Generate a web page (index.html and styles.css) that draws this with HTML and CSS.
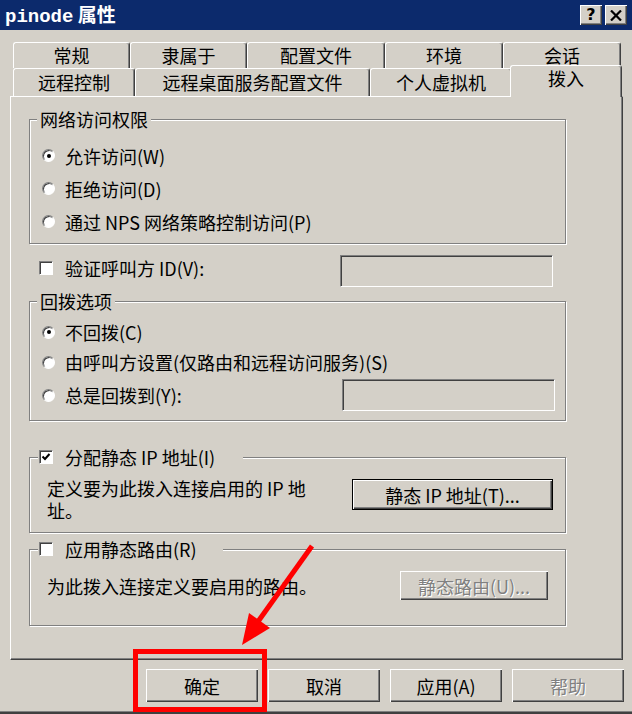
FILE: index.html
```html
<!DOCTYPE html>
<html lang="zh-CN">
<head>
    <meta charset="UTF-8">
    <title>pinode 属性</title>
    <link rel="stylesheet" href="styles.css">
</head>
<body>
    <div class="titlebar">
        <span class="title"><span class="mono">pinode</span> 属性</span>
        <div class="caption-btns">
            <span class="cbtn">?</span>
            <span class="cbtn">
                <svg width="12" height="11" viewBox="0 0 12 11"><path d="M1 0.5 L11 10.5 M11 0.5 L1 10.5" stroke="#000" stroke-width="2.2"/></svg>
            </span>
        </div>
    </div>

    <div class="tabs">
        <div class="tab-row back">
            <div class="tab" style="width:117px">常规</div>
            <div class="tab" style="width:117px">隶属于</div>
            <div class="tab" style="width:138px">配置文件</div>
            <div class="tab" style="width:118px">环境</div>
            <div class="tab" style="width:118px">会话</div>
        </div>
        <div class="tab-row front">
            <div class="tab" style="width:122px">远程控制</div>
            <div class="tab" style="width:235px">远程桌面服务配置文件</div>
            <div class="tab" style="width:142px">个人虚拟机</div>
            <div class="tab active" style="width:112px">拨入</div>
        </div>
    </div>

    <div class="panel">
        <fieldset class="group">
            <legend class="glabel">网络访问权限</legend>
            <div class="gbody access">
                <div class="opt"><span class="radio on"></span>允许访问(W)</div>
                <div class="opt"><span class="radio"></span>拒绝访问(D)</div>
                <div class="opt"><span class="radio"></span>通过 NPS 网络策略控制访问(P)</div>
            </div>
        </fieldset>

        <div class="idrow">
            <span class="lbl"><span class="check"></span>验证呼叫方 ID(V):</span>
            <span class="field"></span>
        </div>

        <fieldset class="group callback">
            <legend class="glabel">回拨选项</legend>
            <div class="gbody cb">
                <div class="opt short"><span class="radio on"></span>不回拨(C)</div>
                <div class="opt short"><span class="radio"></span>由呼叫方设置(仅路由和远程访问服务)(S)</div>
                <div class="opt last"><span class="radio"></span>总是回拨到(Y):<span class="field cbfield"></span></div>
            </div>
        </fieldset>

        <fieldset class="group staticip">
            <legend class="glabel chk">
                <span class="check on">
                    <svg width="10" height="10" viewBox="0 0 10 10"><path d="M1.5 4.5 L4 7 L8.5 2" fill="none" stroke="#000" stroke-width="2"/></svg>
                </span>分配静态 IP 地址(I)
            </legend>
            <div class="gbody ipbody">
                <div class="desc">定义要为此拨入连接启用的 IP 地<br>址。</div>
                <button class="btn default ipbtn">静态 IP 地址(T)...</button>
            </div>
        </fieldset>

        <fieldset class="group routes">
            <legend class="glabel chk short"><span class="check"></span>应用静态路由(R)</legend>
            <div class="gbody routebody">
                <div class="desc">为此拨入连接定义要启用的路由。</div>
                <button class="btn disabled routebtn">静态路由(U)...</button>
            </div>
        </fieldset>
    </div>

    <div class="buttons">
        <button class="btn">确定</button>
        <button class="btn">取消</button>
        <button class="btn">应用(A)</button>
        <button class="btn disabled">帮助</button>
    </div>
    <div class="winbottom"></div>

    <div class="mark"></div>
    <svg class="arrow" width="632" height="714" viewBox="0 0 632 714">
        <line x1="312" y1="546" x2="257" y2="623" stroke="#f00" stroke-width="5"/>
        <polygon points="242,645 270,628 249,613" fill="#f00"/>
    </svg>
</body>
</html>
```

FILE: styles.css
```css
body {
    margin: 0;
    width: 632px;
    height: 714px;
    overflow: hidden;
    position: relative;
    background: #d4d0c8;
    font-family: "Noto Sans CJK SC", sans-serif;
    font-size: 18px;
    color: #000;
}

.titlebar {
    height: 30px;
    background: #0c2a6c;
    display: flex;
    align-items: center;
    justify-content: space-between;
    padding: 0 5px 0 5px;
    color: #fff;
}

.title {
    font-weight: bold;
    font-size: 19px;
    line-height: 30px;
}

.title .mono {
    font-family: "Liberation Mono", monospace;
}

.caption-btns {
    display: flex;
    gap: 3px;
}

.cbtn {
    width: 22px;
    height: 20px;
    background: #d4d0c8;
    color: #000;
    font: bold 16px/20px "DejaVu Sans", sans-serif;
    display: flex;
    align-items: center;
    justify-content: center;
    box-shadow: inset 1px 1px #fff, inset -1px -1px #404040, inset -2px -2px #808080;
}

/* tabs */
.tabs {
    margin-top: 12px;
    padding-left: 13px;
}

.tab-row {
    display: flex;
}

.tab-row.back {
    height: 26px;
}

.tab-row.front {
    height: 28px;
}

.tab {
    box-sizing: border-box;
    height: 100%;
    background: #d4d0c8;
    border: 1px solid #fff;
    border-right-color: #404040;
    border-bottom: none;
    border-radius: 3px 3px 0 0;
    box-shadow: inset -1px 0 #808080;
    text-align: center;
    line-height: 24px;
}

.front .tab {
    line-height: 26px;
}

.front .tab.active {
    position: relative;
    z-index: 1;
    align-self: flex-start;
    height: 32px;
    margin-top: -3px;
    margin-left: -2px;
    padding-top: 2px;
    line-height: 20px;
}

/* page */
.panel {
    box-sizing: border-box;
    height: 564px;
    margin: 0 9px 0 10px;
    border: 1px solid;
    border-color: #fff #404040 #404040 #fff;
    box-shadow: inset -1px -1px #808080;
    padding: 12px 56px 0 18px;
}

.group {
    margin: 0;
    padding: 0;
    min-width: 0;
    border: 1px solid #808080;
    box-shadow: inset 1px 1px #fff, 1px 1px #fff;
}

.glabel {
    margin-left: 7px;
    padding: 0 3px;
    line-height: 20px;
    background: #d4d0c8;
}

.glabel.chk {
    display: flex;
    align-items: center;
    height: 22px;
    margin-left: 8px;
    padding: 0 28px 0 1px;
}

.glabel.chk.short {
    padding-right: 26px;
}

.glabel.chk .check {
    margin-right: 12px;
}

.gbody.access {
    padding: 10px 0 5px;
}

.opt {
    display: flex;
    align-items: center;
    height: 33px;
    padding-left: 12px;
}

.opt.short {
    height: 30px;
}

.opt.last {
    height: 32px;
    margin-top: 2px;
}

.radio {
    flex: none;
    position: relative;
    box-sizing: border-box;
    width: 13px;
    height: 13px;
    margin-right: 10px;
    border-radius: 50%;
    background: #fff;
    border: 1px solid;
    border-color: #808080 #fff #fff #808080;
    box-shadow: inset 1px 1px #404040;
}

.radio.on::after {
    content: "";
    position: absolute;
    left: 50%;
    top: 50%;
    width: 4px;
    height: 4px;
    margin: -2px 0 0 -2px;
    border-radius: 50%;
    background: #000;
}

.check {
    flex: none;
    box-sizing: border-box;
    width: 14px;
    height: 14px;
    background: #fff;
    border: 1px solid;
    border-color: #808080 #fff #fff #808080;
    box-shadow: inset 1px 1px #404040;
    display: flex;
    align-items: center;
    justify-content: center;
}

.field {
    box-sizing: border-box;
    width: 213px;
    height: 32px;
    margin-left: auto;
    border: 1px solid;
    border-color: #808080 #fff #fff #808080;
    box-shadow: inset 1px 1px #404040;
}

.idrow {
    display: flex;
    align-items: center;
    height: 32px;
    margin-top: 11px;
    padding-left: 10px;
}

.idrow .lbl {
    display: flex;
    align-items: center;
    margin-bottom: 6px;
}

.idrow .check {
    margin-right: 12px;
}

.idrow .field {
    margin-right: 13px;
}

.group.callback {
    margin-top: 4px;
}

.gbody.cb {
    padding: 6px 0 9px;
}

.cbfield {
    margin-right: 10px;
}

.group.staticip {
    margin-top: 25px;
}

.gbody.ipbody {
    display: flex;
    justify-content: space-between;
    align-items: flex-start;
    padding: 9px 12px 11px 17px;
}

.desc {
    line-height: 22px;
}

.group.routes {
    margin-top: 5px;
}

.gbody.routebody {
    display: flex;
    justify-content: space-between;
    align-items: center;
    height: 29px;
    padding: 11px 17px 25px 17px;
}

/* buttons */
.btn {
    box-sizing: border-box;
    border: none;
    padding: 0;
    background: #d4d0c8;
    font: inherit;
    color: #000;
    box-shadow: inset 1px 1px #fff, inset -1px -1px #404040, inset -2px -2px #808080;
}

.btn.default {
    border: 1px solid #000;
}

.btn.disabled {
    color: #808080;
    text-shadow: 1px 1px #fff;
}

.ipbtn {
    width: 201px;
    height: 31px;
    margin-top: 2px;
}

.routebtn {
    width: 148px;
    height: 29px;
}

.buttons {
    display: flex;
    justify-content: flex-end;
    gap: 10px;
    margin-top: 9px;
    padding-right: 8px;
}

.buttons .btn {
    width: 112px;
    height: 33px;
}

.winbottom {
    margin-top: 9px;
    height: 2px;
    border-top: 1px solid #808080;
    background: #404040;
}

/* annotation */
.mark {
    position: absolute;
    left: 133px;
    top: 649px;
    width: 134px;
    height: 63px;
    box-sizing: border-box;
    border: 5px solid #f00;
}

.arrow {
    position: absolute;
    left: 0;
    top: 0;
    pointer-events: none;
}
```
